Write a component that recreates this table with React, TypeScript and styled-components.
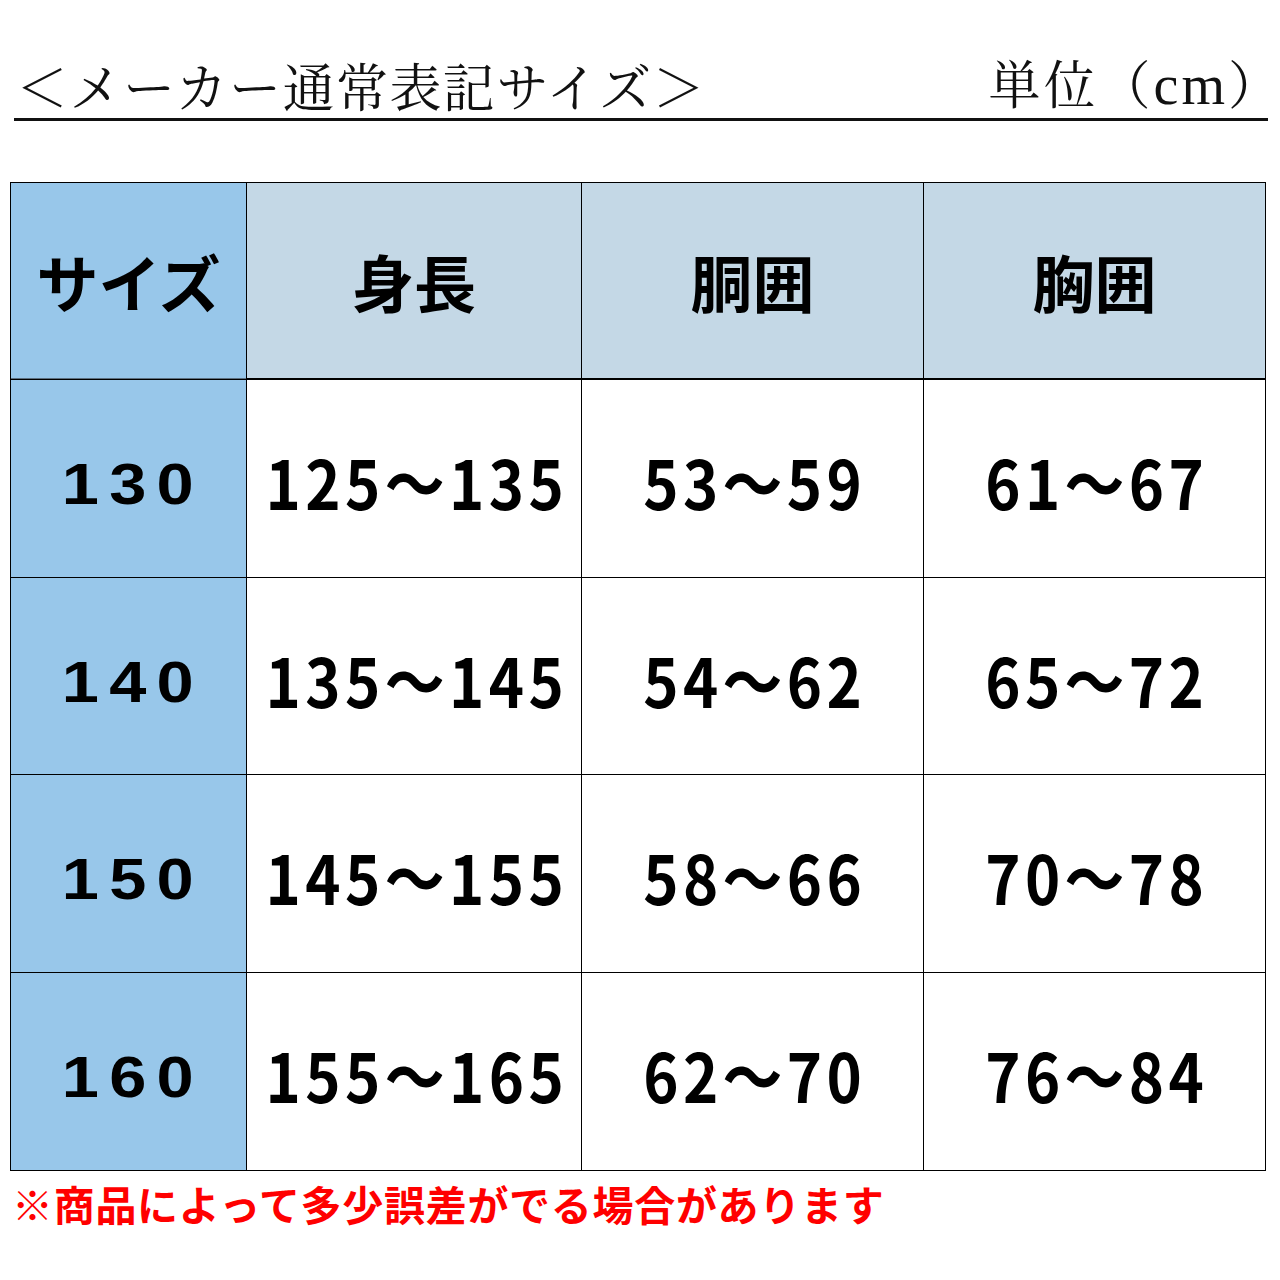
import styled, { createGlobalStyle } from "styled-components";

const GlobalStyle = createGlobalStyle`
  html, body {
    margin: 0;
    padding: 0;
    background: #ffffff;
  }
  body {
    font-family: "Noto Sans CJK JP", "Liberation Sans", sans-serif;
    color: #000;
  }
`;

const Page = styled.div`
  width: 1280px;
  padding: 53px 0 40px;
`;

const TitleBar = styled.div`
  display: flex;
  justify-content: space-between;
  align-items: flex-end;
  margin: 0 12px 0 14px;
  padding: 0 0 4px 2px;
  border-bottom: 3px solid #111;
`;

const Title = styled.h1`
  margin: 0;
  font-family: "Noto Serif CJK JP", "Noto Sans CJK JP", serif;
  font-weight: 400;
  font-size: 52px;
  letter-spacing: 1.5px;
  line-height: 58px;
  color: #111;
`;

const Unit = styled.span`
  margin-right: -12px;
  font-family: "Noto Serif CJK JP", "Noto Sans CJK JP", serif;
  font-weight: 400;
  font-size: 52px;
  letter-spacing: 3px;
  line-height: 58px;
  color: #111;

  em {
    font-style: normal;
    font-size: 56px;
    font-family: "Liberation Serif", serif;
  }

  span {
    letter-spacing: 0;
  }
`;

const SizeTable = styled.div`
  display: grid;
  grid-template-columns: 235px 334px 341px 341px;
  grid-template-rows: 196px 197px 196px 197px 197px;
  gap: 1px;
  padding: 1px;
  width: fit-content;
  margin: 61px 0 0 10px;
  background: #000;
`;

type CellKind = "corner" | "head" | "size" | "value";

const Cell = styled.div<{ $kind: CellKind }>`
  display: flex;
  align-items: center;
  justify-content: center;
  background: ${(p) =>
    p.$kind === "corner" || p.$kind === "size"
      ? "#98c7ea"
      : p.$kind === "head"
      ? "#c4d8e6"
      : "#ffffff"};
  border-bottom: ${(p) =>
    p.$kind === "head" ? "1px solid #000" : p.$kind === "corner" ? "1px solid #5b6f80" : "none"};
  font-family: ${(p) =>
    p.$kind === "size" ? `"Liberation Sans", Arial, sans-serif` : `"Noto Sans CJK JP", sans-serif`};
  font-weight: 700;
  font-size: ${(p) => (p.$kind === "size" ? "58px" : p.$kind === "value" ? "68px" : "62px")};
  padding-top: ${(p) => (p.$kind === "value" ? "5px" : p.$kind === "size" ? "11px" : "0")};
  line-height: 1;
  white-space: nowrap;
`;

// wide gothic digits of the size column
const SizeText = styled.span`
  display: inline-block;
  letter-spacing: 9px;
  margin-right: -9px;
  transform: scaleX(1.15);
`;

// condensed bold digits, as in the original chart
const RangeText = styled.span`
  display: inline-block;
  letter-spacing: 5px;
  margin-right: -5px;
  transform: scaleX(0.88);
`;

const Note = styled.p`
  margin: 8px 0 0 12px;
  font-family: "Noto Sans CJK JP", sans-serif;
  font-weight: 700;
  font-size: 41px;
  letter-spacing: 0.7px;
  line-height: 48px;
  color: #ff0000;
`;

const headers = ["身長", "胴囲", "胸囲"];

const rows = [
  { size: "130", values: ["125～135", "53～59", "61～67"] },
  { size: "140", values: ["135～145", "54～62", "65～72"] },
  { size: "150", values: ["145～155", "58～66", "70～78"] },
  { size: "160", values: ["155～165", "62～70", "76～84"] },
];

function App() {
  return (
    <Page>
      <GlobalStyle />
      <TitleBar>
        <Title>＜メーカー通常表記サイズ＞</Title>
        <Unit>
          単位（<em>cm</em>
          <span>）</span>
        </Unit>
      </TitleBar>

      <SizeTable>
        <Cell $kind="corner">サイズ</Cell>
        {headers.map((h) => (
          <Cell key={h} $kind="head">
            {h}
          </Cell>
        ))}
        {rows.flatMap((r) => [
          <Cell key={r.size} $kind="size">
            <SizeText>{r.size}</SizeText>
          </Cell>,
          ...r.values.map((v, i) => (
            <Cell key={r.size + "-" + i} $kind="value">
              <RangeText>{v}</RangeText>
            </Cell>
          )),
        ])}
      </SizeTable>

      <Note>※商品によって多少誤差がでる場合があります</Note>
    </Page>
  );
}

export default App;
